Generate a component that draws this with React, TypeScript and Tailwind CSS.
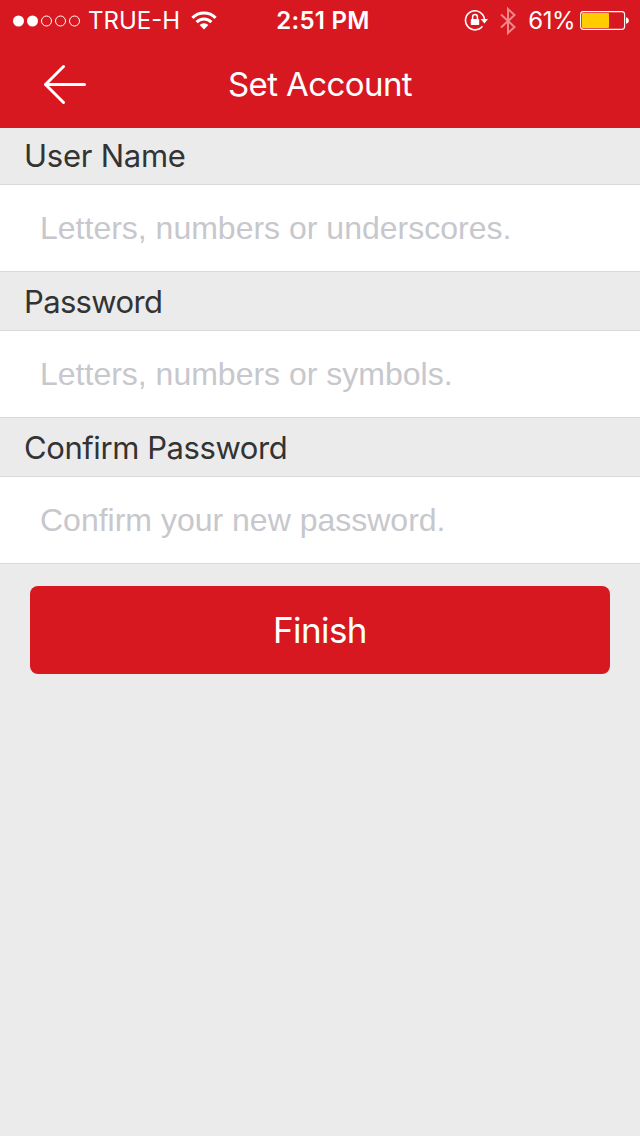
import { useState } from "react";

const fields = [
  { id: "username", label: "User Name", type: "text", placeholder: "Letters, numbers or underscores.", labelClass: "h-14 pb-0.5 tracking-[-0.25px]" },
  { id: "password", label: "Password", type: "password", placeholder: "Letters, numbers or symbols.", labelClass: "h-[58px] tracking-[-0.65px]" },
  { id: "confirm", label: "Confirm Password", type: "password", placeholder: "Confirm your new password.", labelClass: "h-[58px] tracking-[-0.42px]" },
];

function SignalDots() {
  return (
    <svg width="68" height="12" viewBox="0 0 68 12" className="shrink-0">
      <circle cx="5.5" cy="6" r="5.5" fill="#fff" />
      <circle cx="19.5" cy="6" r="5.5" fill="#fff" />
      <g fill="none" stroke="#fff" strokeWidth="1">
        <circle cx="33.5" cy="6" r="5" />
        <circle cx="47.5" cy="6" r="5" />
        <circle cx="61.5" cy="6" r="5" />
      </g>
    </svg>
  );
}

function WifiIcon() {
  return (
    <svg width="26" height="19" viewBox="0 0 26 19" className="shrink-0">
      <g fill="none" stroke="#fff" strokeWidth="3">
        <path d="M1.4 6.9a16.4 16.4 0 0 1 23.2 0" />
        <path d="M5.6 11.1a10.4 10.4 0 0 1 14.8 0" />
      </g>
      <path d="M8.6 14.1a6.2 6.2 0 0 1 8.8 0L13 18.5z" fill="#fff" />
    </svg>
  );
}

function RotationLockIcon() {
  return (
    <svg width="24" height="22" viewBox="0 0 24 22" className="shrink-0">
      <path d="M18.4 16.3A9.5 9.5 0 1 1 20.4 9" fill="none" stroke="#fff" strokeWidth="1.6" />
      <path d="M16.6 9h7.4L20.4 13.4z" fill="#fff" />
      <rect x="6.8" y="9" width="8.4" height="6" rx="0.7" fill="#fff" />
      <path d="M8.6 9.6V7a2.4 2.4 0 0 1 4.8 0v2.6" fill="none" stroke="#fff" strokeWidth="1.5" />
    </svg>
  );
}

function BluetoothIcon() {
  return (
    <svg width="16" height="28" viewBox="0 0 16 28" className="shrink-0">
      <path d="M1 7.5l13.5 12.5L8 26V2l6.5 6L1 20.5" fill="none" stroke="#f0888c" strokeWidth="2" />
    </svg>
  );
}

function BatteryIcon() {
  return (
    <svg width="49" height="20" viewBox="0 0 49 20" className="shrink-0">
      <rect x="0.6" y="0.6" width="44" height="17.8" rx="2.8" fill="none" stroke="#fff" strokeWidth="1.1" />
      <rect x="2" y="2" width="27" height="15" rx="1" fill="#fc0" />
      <path d="M46 6.2c1.8.4 2.8 1.6 2.8 3.3s-1 2.9-2.8 3.3z" fill="#fff" />
    </svg>
  );
}

function StatusBar() {
  return (
    <div className="grid h-10 grid-cols-[1fr_auto_1fr] items-center pl-[13px] pr-[11px] pt-px text-2xl leading-none text-white">
      <div className="flex items-center">
        <SignalDots />
        <span className="ml-[7px] mr-[11px] pt-px">TRUE-H</span>
        <WifiIcon />
      </div>
      <span className="pl-1 pt-px font-semibold tracking-[0.3px]">2:51 PM</span>
      <div className="flex items-center justify-end">
        <RotationLockIcon />
        <span className="ml-3 mr-3 flex"><BluetoothIcon /></span>
        <span className="mr-[5px] pt-px tracking-[-0.5px]">61%</span>
        <BatteryIcon />
      </div>
    </div>
  );
}

export default function App() {
  const [values, setValues] = useState<Record<string, string>>({});

  return (
    <div className="min-h-[1136px] w-full bg-[#ebebeb] font-['Inter',sans-serif]">
      <header className="h-32 bg-[#d71820]">
        <StatusBar />
        <div className="grid h-[88px] grid-cols-[1fr_auto_1fr] items-center">
          <button aria-label="Back" className="ml-11 w-fit">
            <svg width="42" height="40" viewBox="0 0 42 40" fill="none" stroke="#fff" strokeWidth="3" strokeLinecap="round" strokeLinejoin="round">
              <path d="M19.5 2.5L1.5 20.5l18 18M1.5 20.5h39" />
            </svg>
          </button>
          <h1 className="text-[33px] leading-none tracking-[-0.6px] text-white">Set Account</h1>
        </div>
      </header>

      <form onSubmit={(e) => e.preventDefault()}>
        {fields.map((field) => (
          <div key={field.id}>
            <label htmlFor={field.id} className={`flex items-center pl-6 text-[31px] leading-none text-[#333] ${field.labelClass}`}>
              {field.label}
            </label>
            <input
              id={field.id}
              type={field.type}
              value={values[field.id] ?? ""}
              onChange={(e) => setValues({ ...values, [field.id]: e.target.value })}
              placeholder={field.placeholder}
              className="block h-[88px] w-full border-y border-[#d9d9d9] bg-white px-10 font-['Liberation_Sans',sans-serif] text-[32px] text-[#333] outline-none placeholder:text-[#c7c7cc]"
            />
          </div>
        ))}
        <div className="px-[30px] pt-[22px]">
          <button type="submit" className="h-[88px] w-full rounded-lg bg-[#d71820] text-[35px] tracking-[-0.6px] text-white">Finish</button>
        </div>
      </form>
    </div>
  );
}
